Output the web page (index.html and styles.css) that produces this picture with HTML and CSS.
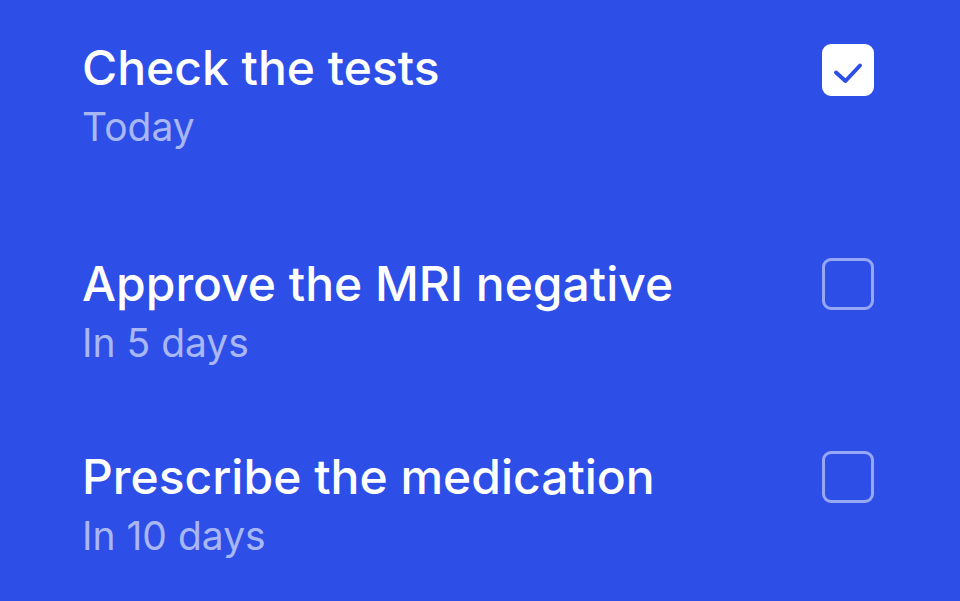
FILE: index.html
```html
<!DOCTYPE html>
<html lang="en">
<head>
    <meta charset="UTF-8">
    <meta name="viewport" content="width=device-width, initial-scale=1.0">
    <title>Tasks</title>
    <link rel="stylesheet" href="styles.css">
</head>
<body>
    <div class="tasks">
        <div class="task task-first">
            <div class="task-text">
                <h2>Check the tests</h2>
                <p>Today</p>
            </div>
            <div class="check checked">
                <svg width="52" height="52" viewBox="0 0 52 52" fill="none">
                    <path d="M14 28.5l9.5 8.5L38 21.5" stroke="#2d4fe8" stroke-width="4" stroke-linecap="round" stroke-linejoin="round"/>
                </svg>
            </div>
        </div>

        <div class="task">
            <div class="task-text">
                <h2>Approve the MRI negative</h2>
                <p>In 5 days</p>
            </div>
            <div class="check"></div>
        </div>

        <div class="task">
            <div class="task-text">
                <h2>Prescribe the medication</h2>
                <p>In 10 days</p>
            </div>
            <div class="check"></div>
        </div>
    </div>
</body>
</html>
```

FILE: styles.css
```css
html, body {
    margin: 0;
    height: 100%;
}

body {
    font-family: Inter, 'Noto Sans', sans-serif;
    background: #2d4fe8;
    color: white;
}

.tasks {
    padding: 39px 86px 0 82px;
    display: flex;
    flex-direction: column;
    gap: 82px;
}

.task {
    display: flex;
    align-items: flex-start;
    justify-content: space-between;
}

.task-first {
    margin-bottom: 23px;
}

.task-text h2 {
    margin: 0;
    font-size: 48px;
    font-weight: 500;
    line-height: 58px;
}

.task-text p {
    margin: 6px 0 0;
    font-size: 39px;
    line-height: 47px;
    color: rgba(255, 255, 255, 0.6);
}

.check {
    box-sizing: border-box;
    width: 52px;
    height: 52px;
    margin-top: 3px;
    border: 3px solid rgba(255, 255, 255, 0.5);
    border-radius: 9px;
    position: relative;
}

.check.checked {
    margin-top: 5px;
    background: white;
    border-color: white;
}

.check svg {
    position: absolute;
    top: -3px;
    left: -3px;
}
```
